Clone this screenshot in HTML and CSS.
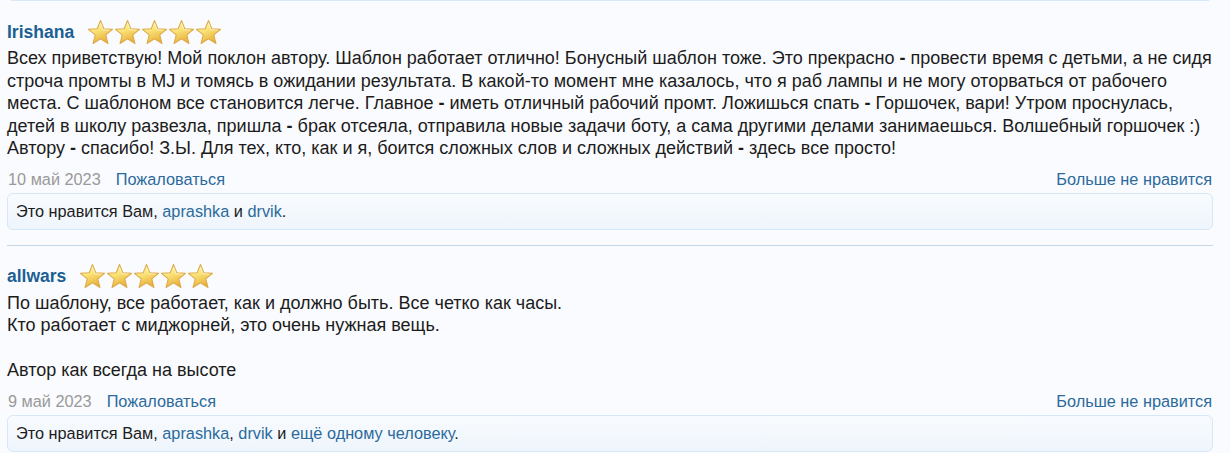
FILE: index.html
```html
<!DOCTYPE html>
<html lang="ru">
<head>
  <meta charset="UTF-8">
  <title>Отзывы</title>
  <link rel="stylesheet" href="styles.css">
</head>
<body>
  <svg width="0" height="0" class="defs">
    <defs>
      <linearGradient id="starFill" x1="0" y1="0" x2="0.4" y2="1">
        <stop offset="0" stop-color="#fff9d2"/>
        <stop offset="0.45" stop-color="#fbe77e"/>
        <stop offset="1" stop-color="#eab23c"/>
      </linearGradient>
      <symbol id="star" viewBox="0 0 26 26">
        <path d="M13 1.5 L16.2 9.4 L24.6 9.9 L18.1 15.3 L20.2 23.6 L13 19 L5.8 23.6 L7.9 15.3 L1.4 9.9 L9.8 9.4 Z"
              fill="url(#starFill)" stroke="#dcaa4a" stroke-width="1" stroke-linejoin="round"/>
        <path d="M13 4 L15.3 10.3 L21.6 10.8" fill="none" stroke="#fffbe0" stroke-width="0.8" opacity="0.8"/>
      </symbol>
    </defs>
  </svg>

  <div class="comments">
    <div class="prev-edge"></div>

    <div class="comment">
      <div class="head">
        <a class="user" href="#">Irishana</a>
        <span class="stars">
          <svg><use href="#star"/></svg><svg><use href="#star"/></svg><svg><use href="#star"/></svg><svg><use href="#star"/></svg><svg><use href="#star"/></svg>
        </span>
      </div>
      <div class="text">Всех приветствую! Мой поклон автору. Шаблон работает отлично! Бонусный шаблон тоже. Это прекрасно <b>-</b> провести время с детьми, а не сидя строча промты в MJ и томясь в ожидании результата. В какой-то момент мне казалось, что я раб лампы и не могу оторваться от рабочего места. С шаблоном все становится легче. Главное <b>-</b> иметь отличный рабочий промт. Ложишься спать <b>-</b> Горшочек, вари! Утром проснулась, детей в школу развезла, пришла <b>-</b> брак отсеяла, отправила новые задачи боту, а сама другими делами занимаешься. Волшебный горшочек :) Автору <b>-</b> спасибо! З.Ы. Для тех, кто, как и я, боится сложных слов и сложных действий <b>-</b> здесь все просто!</div>
      <div class="meta">
        <span class="date">10 май 2023</span>
        <a class="report" href="#">Пожаловаться</a>
        <a class="unlike" href="#">Больше не нравится</a>
      </div>
      <div class="likes">Это нравится Вам, <a href="#">aprashka</a> и <a href="#">drvik</a>.</div>
    </div>

    <div class="comment">
      <div class="head">
        <a class="user" href="#">allwars</a>
        <span class="stars">
          <svg><use href="#star"/></svg><svg><use href="#star"/></svg><svg><use href="#star"/></svg><svg><use href="#star"/></svg><svg><use href="#star"/></svg>
        </span>
      </div>
      <div class="text">По шаблону, все работает, как и должно быть. Все четко как часы.<br>Кто работает с миджорней, это очень нужная вещь.<br><br>Автор как всегда на высоте</div>
      <div class="meta">
        <span class="date">9 май 2023</span>
        <a class="report" href="#">Пожаловаться</a>
        <a class="unlike" href="#">Больше не нравится</a>
      </div>
      <div class="likes">Это нравится Вам, <a href="#">aprashka</a>, <a href="#">drvik</a> и <a href="#">ещё одному человеку</a>.</div>
    </div>
  </div>
</body>
</html>
```

FILE: styles.css
```css
body {
  margin: 0;
  background: #fafbfe;
  color: #1c1c1c;
  font-family: "Liberation Sans", Arial, sans-serif;
  font-size: 16px;
  overflow: hidden;
}
.defs { position: absolute; }
a { color: #2b6a9c; text-decoration: none; }

.comments {
  width: 1206px;
  padding-left: 7px;
}
.prev-edge {
  height: 1px;
  margin: 0 4px;
  background: #d7e9f9;
}

.comment {
  padding-top: 16px;
  border-bottom: 1px solid #c6d8e6;
  padding-bottom: 15px;
}
.comment:last-child { border-bottom: none; }

.head {
  display: flex;
  align-items: center;
  gap: 13px;
  height: 30px;
}
.user {
  font-size: 17.5px;
  font-weight: bold;
  color: #1b5f94;
}
.stars { display: flex; }
.stars svg { width: 27px; height: 27px; }

.text {
  font-size: 18px;
  line-height: 22.5px;
}
.text b { font-weight: bold; }

.meta {
  display: flex;
  align-items: center;
  margin-top: 9px;
  font-size: 16.3px;
  line-height: 20px;
}
.date { color: #999; margin-left: 1px; }
.report { margin-left: 15px; }
.unlike { margin-left: auto; margin-right: 1px; }

.likes {
  margin-top: 4px;
  height: 35px;
  line-height: 35px;
  padding-left: 8px;
  font-size: 16.3px;
  border: 1px solid #d6e8f7;
  border-radius: 6px;
  background: linear-gradient(#f8fbfe, #eef5fc);
}
```
